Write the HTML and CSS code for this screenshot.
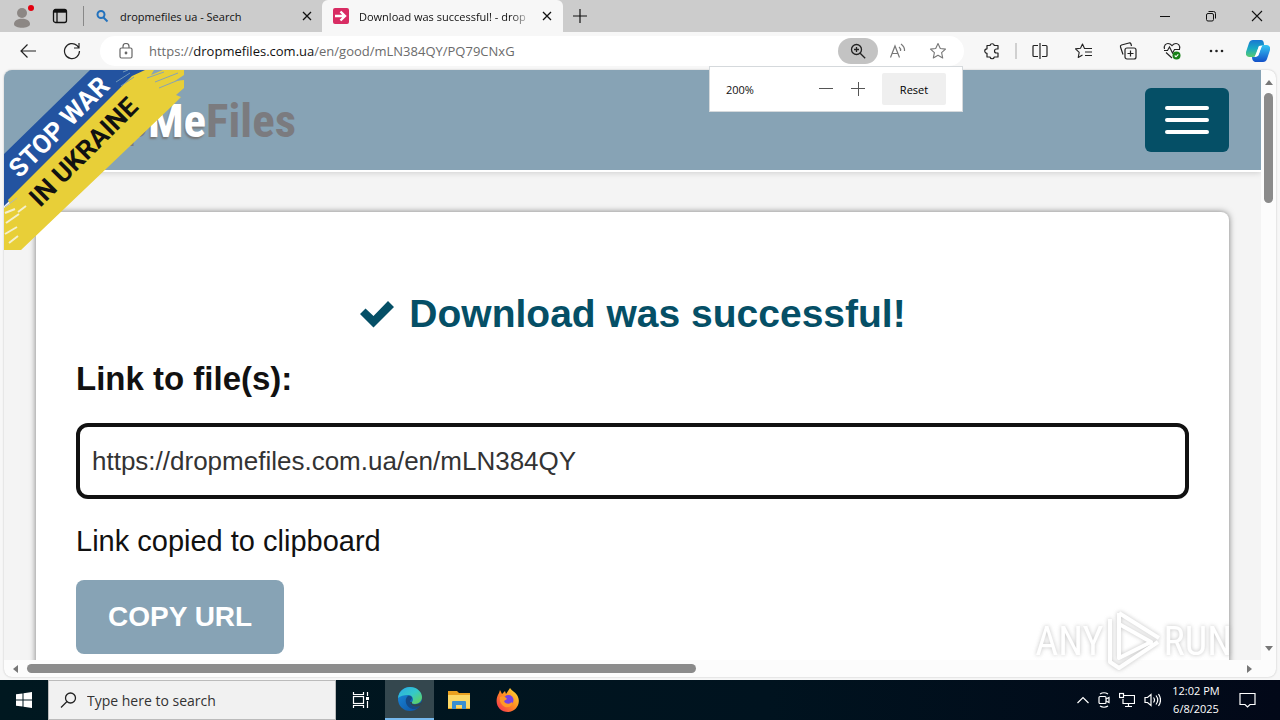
FILE: index.html
```html
<!DOCTYPE html>
<html lang="en">
<head>
    <meta charset="utf-8">
    <title>Download was successful! - dropmefiles</title>
    <link rel="stylesheet" href="styles.css">
</head>
<body>
    <div class="tab-strip">
        <button class="profile" aria-label="Profile">
            <svg width="24" height="28" viewBox="0 0 24 28"><circle cx="12" cy="11" r="5" fill="#8c8784"/><path d="M4 22c0-7 16-7 16 0 0 5-16 5-16 0z" fill="#8c8784"/><circle cx="21" cy="6" r="3" fill="#e3000f"/></svg>
        </button>
        <button class="workspaces" aria-label="Tab actions">
            <svg width="16" height="16" viewBox="0 0 16 16" fill="none" stroke="#111" stroke-width="1.3"><rect x="1.5" y="1.5" width="13" height="13" rx="2"/><path d="M5 4v10"/><path d="M2 3.2h12" stroke-width="3"/></svg>
        </button>
        <div class="tab">
            <svg class="tab-icon" width="16" height="16" viewBox="0 0 16 16" fill="none" stroke="#2372bd" stroke-width="2"><circle cx="7" cy="6.500" r="3.500"/><path d="M9.500 9.500l4 4"/></svg>
            <span class="tab-title">dropmefiles ua - Search</span>
            <button class="tab-close" aria-label="Close tab"><svg width="10" height="10" viewBox="0 0 10 10" stroke="#111" stroke-width="1.3"><path d="M1 1l8 8M9 1l-8 8"/></svg></button>
        </div>
        <div class="tab active">
            <svg class="tab-icon" width="16" height="16" viewBox="0 0 16 16"><rect width="16" height="16" rx="2" fill="#d82c63"/><path d="M2 8h10M7.500 3.500L12 8l-4.500 4.500" fill="none" stroke="#fff" stroke-width="2.400"/></svg>
            <span class="tab-title">Download was successful! - drop</span>
            <button class="tab-close" aria-label="Close tab"><svg width="10" height="10" viewBox="0 0 10 10" stroke="#111" stroke-width="1.3"><path d="M1 1l8 8M9 1l-8 8"/></svg></button>
        </div>
        <button class="new-tab" aria-label="New tab"><svg width="14" height="14" viewBox="0 0 14 14" stroke="#111" stroke-width="1.2"><path d="M7 0v14M0 7h14"/></svg></button>
        <div class="window-controls">
            <button aria-label="Minimize"><svg width="12" height="12" viewBox="0 0 12 12" stroke="#111"><path d="M1 6.500h10"/></svg></button>
            <button aria-label="Restore"><svg width="12" height="12" viewBox="0 0 12 12" fill="none" stroke="#111"><rect x="1.500" y="3.500" width="7" height="7.500" rx="1.500"/><path d="M3.500 1.500h5a2 2 0 0 1 2 2v5"/></svg></button>
            <button aria-label="Close"><svg width="12" height="12" viewBox="0 0 12 12" stroke="#111" stroke-width="1.100"><path d="M1 1l10 10M11 1L1 11"/></svg></button>
        </div>
    </div>

    <div class="toolbar">
        <button class="tool" aria-label="Back"><svg width="18" height="16" viewBox="0 0 18 16" fill="none" stroke="#222" stroke-width="1.200"><path d="M17 8H2M8.500 1.500L2 8l6.500 6.500"/></svg></button>
        <button class="tool" aria-label="Refresh"><svg width="18" height="18" viewBox="0 0 18 18" fill="none" stroke="#222" stroke-width="1.200"><path d="M16.500 9A7.500 7.500 0 1 1 14 3.500l1.500 2M16 1v5h-5"/></svg></button>
        <div class="address-bar">
            <svg class="lock" width="14" height="16" viewBox="0 0 14 16" fill="none" stroke="#666" stroke-width="1.200"><rect x="1" y="5" width="12" height="10" rx="1.500"/><path d="M4 5V3.500a3 3 0 0 1 6 0V5"/><circle cx="7" cy="10" r=".8" fill="#666"/></svg>
            <div class="url">https://<b>dropmefiles.com.ua</b>/en/good/mLN384QY/PQ79CNxG</div>
            <button class="address-tool zoomed" aria-label="Zoom"><svg width="16" height="16" viewBox="0 0 16 16" fill="none" stroke="#222" stroke-width="1.300"><circle cx="6.500" cy="6.500" r="5"/><path d="M10.200 10.200l5 5M6.500 4v5M4 6.500h5"/></svg></button>
            <button class="address-tool" aria-label="Read aloud"><svg width="18" height="16" viewBox="0 0 18 16" fill="none" stroke="#777" stroke-width="1.200"><path d="M1.500 14.500L6 3l4.500 11.500M3 10.500h6M10 4q2 1.500 1.500 4M12 1q4 3 3.500 7"/></svg></button>
            <button class="address-tool" aria-label="Add to favorites"><svg width="18" height="18" viewBox="0 0 18 18" fill="none" stroke="#777" stroke-width="1.100" stroke-linejoin="round"><path d="M9 1.500l2.300 5 5.200.6-3.900 3.600 1.100 5.300L9 13.300 4.300 16l1.100-5.300L1.500 7.100l5.200-.6z"/></svg></button>
        </div>
        <button class="tool" aria-label="Extensions"><svg width="18" height="18" viewBox="0 0 18 18" fill="none" stroke="#222" stroke-width="1.200" stroke-linejoin="round"><path d="M4 3.500h3a2.200 2.200 0 0 1 4.300 0H15V7h-1.500a2 2 0 0 0 0 4H15v4h-3.700a2.200 2.200 0 0 1-4.300 0H4v-3.700a2.200 2.200 0 0 1 0-4.500z"/></svg></button>
        <span class="divider"></span>
        <button class="tool" aria-label="Split screen"><svg width="16" height="16" viewBox="0 0 16 16" fill="none" stroke="#222" stroke-width="1.200"><path d="M6 2.500H2a1 1 0 0 0-1 1v9a1 1 0 0 0 1 1h4M8 0v16M10 2.500h4a1 1 0 0 1 1 1v9a1 1 0 0 1-1 1h-4"/></svg></button>
        <button class="tool" aria-label="Favorites"><svg width="18" height="16" viewBox="0 0 18 16" fill="none" stroke="#222" stroke-width="1.100" stroke-linejoin="round"><path d="M11 5.500H9.500L7.500 1 5.500 5.300l-5 .6 3.700 3.500-1 5.100L7.500 12M10.500 5.500H17M10 9h7M10 12.500h7"/></svg></button>
        <button class="tool" aria-label="Collections"><svg width="18" height="18" viewBox="0 0 18 18" fill="none" stroke="#222" stroke-width="1.200"><rect x="6" y="6" width="11" height="11" rx="2"/><path d="M11.500 8.500v6M8.500 11.500h6M4 12.500L1.500 5q-.5-1.500 1-2L10 1q1.500-.3 2 1l.5 2"/></svg></button>
        <button class="tool" aria-label="Browser essentials"><svg width="18" height="18" viewBox="0 0 18 18" fill="none" stroke="#222" stroke-width="1.100"><path d="M1.500 7C.5 3.500 3 1.500 5 1.500c2 0 3 1 4 2.200 1-1.200 2-2.200 4-2.200s4.500 2 3.500 5.500M3 10.500L9 16M1 8.500h3.500L6.500 5l3 6 2-3.500H17"/><circle cx="13.500" cy="13.500" r="4" fill="#188118" stroke="none"/><path d="M11.700 13.500l1.300 1.300 2.300-2.500" stroke="#fff"/></svg></button>
        <button class="tool" aria-label="Settings and more"><svg width="16" height="4" viewBox="0 0 16 4" fill="#222"><circle cx="3" cy="2" r="1.300"/><circle cx="8.500" cy="2" r="1.300"/><circle cx="14" cy="2" r="1.300"/></svg></button>
        <button class="tool copilot" aria-label="Copilot">
            <svg width="24" height="24" viewBox="0 0 24 24">
                <defs>
                    <linearGradient id="copilotLeft" x1="0" y1="0" x2="0" y2="1"><stop offset="0" stop-color="#1877d2"/><stop offset=".5" stop-color="#18a9c4"/><stop offset="1" stop-color="#5acb70"/></linearGradient>
                    <linearGradient id="copilotRight" x1="0" y1="0" x2="0" y2="1"><stop offset="0" stop-color="#35c6f4"/><stop offset="1" stop-color="#1250c8"/></linearGradient>
                </defs>
                <path d="M7 1h8q3 0 3 5l-5 1-3 9q-1 2-3 2H3q-4-1-3-5L3 4q1-3 4-3z" fill="url(#copilotLeft)"/>
                <path d="M17 6h4q4 1 3 5l-3 9q-1 3-4 3H9q-3-1-3-5h4q2 0 3-3l2-7q1-2 2-2z" fill="url(#copilotRight)"/>
                <path d="M13 7h3l-4 10H9z" fill="#fff"/>
            </svg>
        </button>
        <div class="zoom-popup">
            <span class="zoom-value">200%</span>
            <button class="zoom-step" aria-label="Zoom out"><svg width="14" height="14" viewBox="0 0 14 14" stroke="#555"><path d="M0 6.500h14"/></svg></button>
            <button class="zoom-step" aria-label="Zoom in"><svg width="14" height="14" viewBox="0 0 14 14" stroke="#555"><path d="M0 6.500h14M7.500 0v14"/></svg></button>
            <button class="zoom-reset">Reset</button>
        </div>
    </div>

    <div class="page">
        <div class="site">
            <header class="site-header">
                <a class="logo" href="#"><span class="logo-drop">Drop</span><span class="logo-me">Me</span><span class="logo-files">Files</span></a>
                <button class="menu-toggle" aria-label="Menu"><span></span><span></span><span></span></button>
            </header>
            <main class="card">
                <h1><svg width="36" height="28" viewBox="0 0 36 28"><path d="M1 14l5.500-5.500 8 7.500L29 1l6 6-20.500 20.500z" fill="#054f66"/></svg>Download was successful!</h1>
                <h2><label for="file-link">Link to file(s):</label></h2>
                <input class="file-link" id="file-link" type="text" value="https://dropmefiles.com.ua/en/mLN384QY" readonly>
                <p class="notice">Link copied to clipboard</p>
                <button class="copy-url">COPY URL</button>
            </main>
            <svg class="ribbon" width="180" height="180" viewBox="0 0 180 180">
                <path d="M86 0h58l-6 5 4 0-18 12L0 136V84z" fill="#2353a0"/>
                <path d="M141 0h9l-3 5 12-5h21v5l-9 6 9-1v8l-8 7 5 2-9 9L17 180H0v-42l6-4-2-4 16-16L128 6z" fill="#e8cf38"/>
                <g fill="none" stroke="#e8cf38"><path d="M112 12l14-9M117 16l13-9M119 2l5-2" stroke="#7298b8"/><path d="M143 8l17-6M151 12l23-9M155 18l22-9" stroke="#87a3b5"/><path d="M1 137l12-9" stroke="#a9b6c0"/><path d="M1 143l10-4M2 153l13-9M1 164l12-7M5 173l9-7M14 142l8-6" stroke="#f4f0cd" stroke-width="2"/></g>
                <g class="ribbon-text" transform="rotate(-45)">
                    <text x="-66" y="88" fill="#fff">STOP WAR</text>
                    <text x="-72" y="123" fill="#111">IN UKRAINE</text>
                </g>
            </svg>
        </div>
        <div class="scrollbar vertical"><i class="arrow up"></i><span class="thumb"></span><i class="arrow down"></i></div>
        <div class="scrollbar horizontal"><i class="arrow left"></i><span class="thumb"></span><i class="arrow right"></i></div>
        <div class="watermark">
            <span>ANY</span>
            <svg width="56" height="62" viewBox="0 0 56 62" fill="none" stroke="#fff" stroke-width="4" stroke-linejoin="round"><path d="M13 3v45M4 9v43l9 6 39-26M13 3l40 25M13 14l32 18-32 16z"/></svg>
            <span>RUN</span>
        </div>
    </div>

    <div class="taskbar">
        <button class="start" aria-label="Start"><svg width="16" height="16" viewBox="0 0 16 16" fill="#fff"><path d="M0 2.300L6.500 1.400v6.100H0zM7.500 1.200L16 0v7.500H7.500zM0 8.500h6.500v6.100L0 13.700zM7.500 8.500H16V16l-8.500-1.200z"/></svg></button>
        <label class="task-search">
            <svg width="17" height="17" viewBox="0 0 17 17" fill="none" stroke="#222" stroke-width="1.300"><circle cx="10.500" cy="6" r="5"/><path d="M7 9.500L1 15.500"/></svg>
            <input type="text" placeholder="Type here to search" aria-label="Type here to search">
        </label>
        <button class="task" aria-label="Task view"><svg width="18" height="18" viewBox="0 0 18 18" fill="none" stroke="#fff" stroke-width="1.200"><rect x="1.500" y="5.500" width="10" height="7"/><path d="M1.500 1v2.500h10V1M1.500 17v-2.500h10V17M15.500 1v4M15.500 10v7"/><path d="M14 7.500h3" stroke-width="3"/></svg></button>
        <button class="task running" aria-label="Edge">
            <svg width="24" height="24" viewBox="0 0 24 24">
                <defs>
                    <linearGradient id="edgeTop" x1="0" y1="0" x2="1" y2="1"><stop offset="0" stop-color="#2aa8e8"/><stop offset=".5" stop-color="#35c9c9"/><stop offset="1" stop-color="#68d34c"/></linearGradient>
                    <linearGradient id="edgeBody" x1="0" y1="0" x2="1" y2="1"><stop offset="0" stop-color="#1a8bdd"/><stop offset="1" stop-color="#0c4fa0"/></linearGradient>
                </defs>
                <circle cx="12" cy="12" r="12" fill="url(#edgeBody)"/>
                <path d="M0 11C1 4 6 0 12 0c7 0 12 5 12 10 0 4-3 7-7 7-3 0-4-1-3-2 2-2 1-7-4-7-4 0-8 1-10 3z" fill="url(#edgeTop)"/>
                <path d="M10 9c-5 4-1 13 6 13 3 0 5-1 6-3-4 2-10 0-10-4 0-2 2-3 2-4s-2-3-4-2z" fill="#154a86"/>
                <path d="M14 15c-1 2 2 3 5 2 2 0 4-1 5-3 0 3-1 4-2 5-4 2-10 0-10-4z" fill="#30464f"/>
            </svg>
        </button>
        <button class="task" aria-label="File Explorer"><svg width="22" height="18" viewBox="0 0 22 18"><path d="M0 0h9l2 2h11v16H0z" fill="#e9a120"/><path d="M0 4h22v13H0z" fill="#fbd866"/><path d="M4 18V11q0-1 1-1h12q1 0 1 1v7h-4v-4H8v4z" fill="#3a8fd0"/></svg></button>
        <button class="task" aria-label="Firefox">
            <svg width="24" height="24" viewBox="0 0 24 24">
                <defs><linearGradient id="fox" x1="1" y1="0" x2="0" y2="1"><stop offset="0" stop-color="#ffe436"/><stop offset=".5" stop-color="#ff8a23"/><stop offset="1" stop-color="#f32657"/></linearGradient></defs>
                <path d="M3 5l1-3 2 4 3-3 1 3 4-6c2 3 5 4 7 7 5 8-1 17-9 17C3 24-3 15 3 5z" fill="url(#fox)"/>
                <circle cx="12.500" cy="12" r="5" fill="#7542e5"/>
                <path d="M4 9c3-2 6 0 7 2l-3 2c1 3 5 4 8 1 1 4-3 6-7 5-4-2-6-6-5-10z" fill="#ff9826"/>
            </svg>
        </button>
        <div class="tray">
            <svg width="12" height="8" viewBox="0 0 12 8" fill="none" stroke="#fff" stroke-width="1.200"><path d="M.5 7L6 1.500 11.500 7"/></svg>
            <svg width="12" height="16" viewBox="0 0 12 16" fill="none" stroke="#fff" stroke-width="1.200"><rect x="1" y="4.500" width="7" height="7" rx="1"/><path d="M8 7l3-1.500v5L8 9M2 2q4-2.500 8 0M2 14q4 2.500 8 0"/></svg>
            <svg width="16" height="16" viewBox="0 0 16 16" fill="none" stroke="#fff" stroke-width="1.200"><path d="M5 3.500h10.500v8H4V7M9.500 11.500v3M6 14.500h7"/><rect x=".5" y="1.500" width="4" height="4"/></svg>
            <svg width="17" height="14" viewBox="0 0 17 14" fill="none" stroke="#fff" stroke-width="1.200"><path d="M1 4.500h2.500L7 1.500v11L3.500 9.500H1zM9.500 4.500q2 2.500 0 5M12 2.500q3.500 4.500 0 9M14.500 1q4 6 0 12"/></svg>
            <div class="clock">12:02 PM<br>6/8/2025</div>
            <svg class="notifications" width="17" height="17" viewBox="0 0 17 17" fill="none" stroke="#fff" stroke-width="1.200"><path d="M1 1.500h15v11h-5L8.500 15 6 12.500H1z"/></svg>
        </div>
    </div>
</body>
</html>
```
FILE: styles.css
```css
* {
    box-sizing: border-box;
}
body {
    margin: 0;
    height: 100vh;
    display: flex;
    flex-direction: column;
    overflow: hidden;
    background: #f7f7f7;
    color: #111;
    font-family: "Open Sans", "Noto Sans", sans-serif;
    font-size: 11px;
}
button {
    display: flex;
    align-items: center;
    justify-content: center;
    border: none;
    padding: 0;
    background: none;
    font-family: inherit;
}
svg {
    flex-shrink: 0;
}

/* Tabs */
.tab-strip {
    display: flex;
    height: 32px;
    background: #cccccc;
}
.profile {
    width: 44px;
}
.workspaces {
    width: 32px;
}
.tab {
    display: flex;
    align-items: center;
    width: 239px;
    margin: 6px 0 6px 7px;
    padding: 0 8px 0 10px;
    border-left: 1px solid #888;
}
.tab.active {
    width: 241px;
    margin: 0;
    padding: 0 9px 0 11px;
    border: none;
    border-radius: 6px 6px 0 0;
    background: #f7f7f7;
}
.tab-title {
    flex: 1;
    margin-left: 10px;
    white-space: nowrap;
}
.active .tab-title {
    mask-image: linear-gradient(to right, #000 88%, transparent);
}
.tab-close {
    width: 14px;
    margin-left: 8px;
}
.new-tab {
    width: 34px;
}
.window-controls {
    display: flex;
    margin-left: auto;
}
.window-controls button {
    width: 46px;
}

/* Toolbar */
.toolbar {
    position: relative;
    display: flex;
    align-items: center;
    height: 38px;
    padding: 0 2px 0 6px;
}
.tool {
    width: 44px;
    height: 32px;
}
.copilot {
    width: 40px;
}
.divider {
    width: 2px;
    height: 16px;
    margin: 0 1px;
    background: #d0d0d0;
}
.address-bar {
    flex: 1;
    display: flex;
    align-items: center;
    height: 30px;
    margin: 0 6px;
    padding: 0 6px 0 19px;
    border-radius: 15px;
    background: #fff;
}
.url {
    flex: 1;
    margin-left: 16px;
    color: #6b6b6b;
    font-size: 13px;
}
.url b {
    color: #111;
    font-weight: normal;
}
.address-tool {
    width: 40px;
    height: 26px;
    border-radius: 13px;
}
.zoomed {
    background: #c3c3c3;
}
.zoom-popup {
    position: absolute;
    top: 34px;
    right: 317px;
    z-index: 2;
    display: flex;
    align-items: center;
    width: 254px;
    height: 46px;
    padding: 0 16px;
    border: 1px solid #d5d9dc;
    background: #fff;
}
.zoom-value {
    flex: 1;
}
.zoom-step {
    width: 32px;
    height: 32px;
}
.zoom-reset {
    width: 64px;
    height: 32px;
    margin-left: 8px;
    border-radius: 2px;
    background: #efefef;
    font-size: 11px;
}

/* Page area */
.page {
    position: relative;
    flex: 1;
    min-height: 0;
    display: grid;
    grid-template-columns: 1fr 15px;
    grid-template-rows: minmax(0, 1fr) 17px;
    margin: 0 4px 3px;
    border-radius: 8px;
    overflow: hidden;
    background: #fcfcfc;
    box-shadow: 0 0 2px #bbb;
}
.site {
    position: relative;
    overflow: hidden;
    background: #f4f4f4;
    font-family: "Liberation Sans", Arial, sans-serif;
}
.site-header {
    display: flex;
    align-items: center;
    justify-content: space-between;
    height: 102px;
    padding: 0 32px 0 56px;
    border-bottom: 2px solid #fff;
    background: #87a3b5;
    box-shadow: 0 1px 6px rgba(0, 0, 0, 0.15);
}
.logo {
    font-family: "Liberation Sans Narrow", "Roboto Condensed", "Liberation Sans", sans-serif;
    font-size: 47px;
    font-weight: bold;
    text-decoration: none;
}
.logo-drop,
.logo-files {
    color: #7b7b7f;
}
.logo-me {
    color: #fff;
    text-shadow: -1px 2px 2px #777;
}
.menu-toggle {
    flex-direction: column;
    gap: 8px;
    width: 84px;
    height: 64px;
    border-radius: 6px;
    background: #054f66;
}
.menu-toggle span {
    width: 44px;
    height: 4px;
    border-radius: 2px;
    background: #fff;
}
.card {
    height: 800px;
    margin: 40px 32px;
    padding: 78px 40px;
    border-radius: 8px;
    background: #fff;
    box-shadow: 0 0 6px rgba(0, 0, 0, 0.5);
}
.card h1 {
    display: flex;
    align-items: center;
    justify-content: center;
    gap: 14px;
    margin: 0;
    color: #054f66;
    font-size: 39px;
    line-height: 48px;
}
.card h2 {
    margin: 21px 0 24px;
    font-size: 33px;
    line-height: 40px;
}
.file-link {
    display: block;
    width: 100%;
    height: 76px;
    padding: 0 12px;
    border: 4px solid #111;
    border-radius: 12px;
    background: #fff;
    color: #333;
    font-family: inherit;
    font-size: 26px;
}
.notice {
    margin: 24px 0 21px;
    font-size: 29px;
    line-height: 36px;
}
.copy-url {
    padding: 0 32px;
    height: 74px;
    border-radius: 8px;
    background: #87a3b5;
    color: #fff;
    font-size: 28px;
    font-weight: bold;
}
.ribbon {
    position: absolute;
    top: 0;
    left: 0;
}
.ribbon-text {
    font-family: Roboto, sans-serif;
    font-size: 26px;
    font-weight: bold;
}

/* Scrollbars */
.scrollbar {
    display: flex;
    align-items: center;
}
.vertical {
    flex-direction: column;
    padding: 10px 0 9px;
}
.horizontal {
    padding: 0 9px;
}
.thumb {
    border-radius: 5px;
    background: #8b8b8b;
}
.vertical .thumb {
    width: 9px;
    height: 110px;
    margin: 8px 0 auto;
}
.horizontal .thumb {
    width: 54%;
    height: 9px;
    margin: 0 auto 0 9px;
}
.arrow {
    border: 4px solid transparent;
}
.up {
    border-top: none;
    border-bottom: 5px solid #777;
}
.down {
    border-bottom: none;
    border-top: 5px solid #777;
}
.left {
    border-left: none;
    border-right: 5px solid #777;
}
.right {
    border-right: none;
    border-left: 5px solid #777;
}

.watermark {
    position: absolute;
    right: 44px;
    bottom: 5px;
    display: flex;
    align-items: center;
    gap: 2px;
    color: #fff;
    font-family: "Liberation Sans Narrow", "Roboto Condensed", "Liberation Sans", sans-serif;
    font-size: 40px;
    opacity: 0.7;
    filter: drop-shadow(0 0 2px #aaa);
}

/* Taskbar */
.taskbar {
    display: flex;
    height: 40px;
    background: linear-gradient(to right, #001820, #00131f 60%, #020818);
    color: #fff;
}
.start {
    width: 48px;
}
.task-search {
    display: flex;
    align-items: center;
    width: 288px;
    padding: 0 11px;
    border: 1px solid #bbb;
    background: #f1f1f1;
}
.task-search input {
    flex: 1;
    min-width: 0;
    margin-left: 10px;
    padding: 0;
    border: none;
    background: none;
    font-family: inherit;
    font-size: 14px;
}
.task-search input::placeholder {
    color: #333;
}
.task {
    width: 49px;
}
.running {
    border-bottom: 2px solid #76b9ed;
    background: #34474e;
}
.tray {
    display: flex;
    align-items: center;
    gap: 9px;
    margin-left: auto;
    padding-right: 24px;
}
.clock {
    width: 52px;
    line-height: 18px;
    text-align: center;
    white-space: nowrap;
}
.notifications {
    margin-left: 8px;
}
```
